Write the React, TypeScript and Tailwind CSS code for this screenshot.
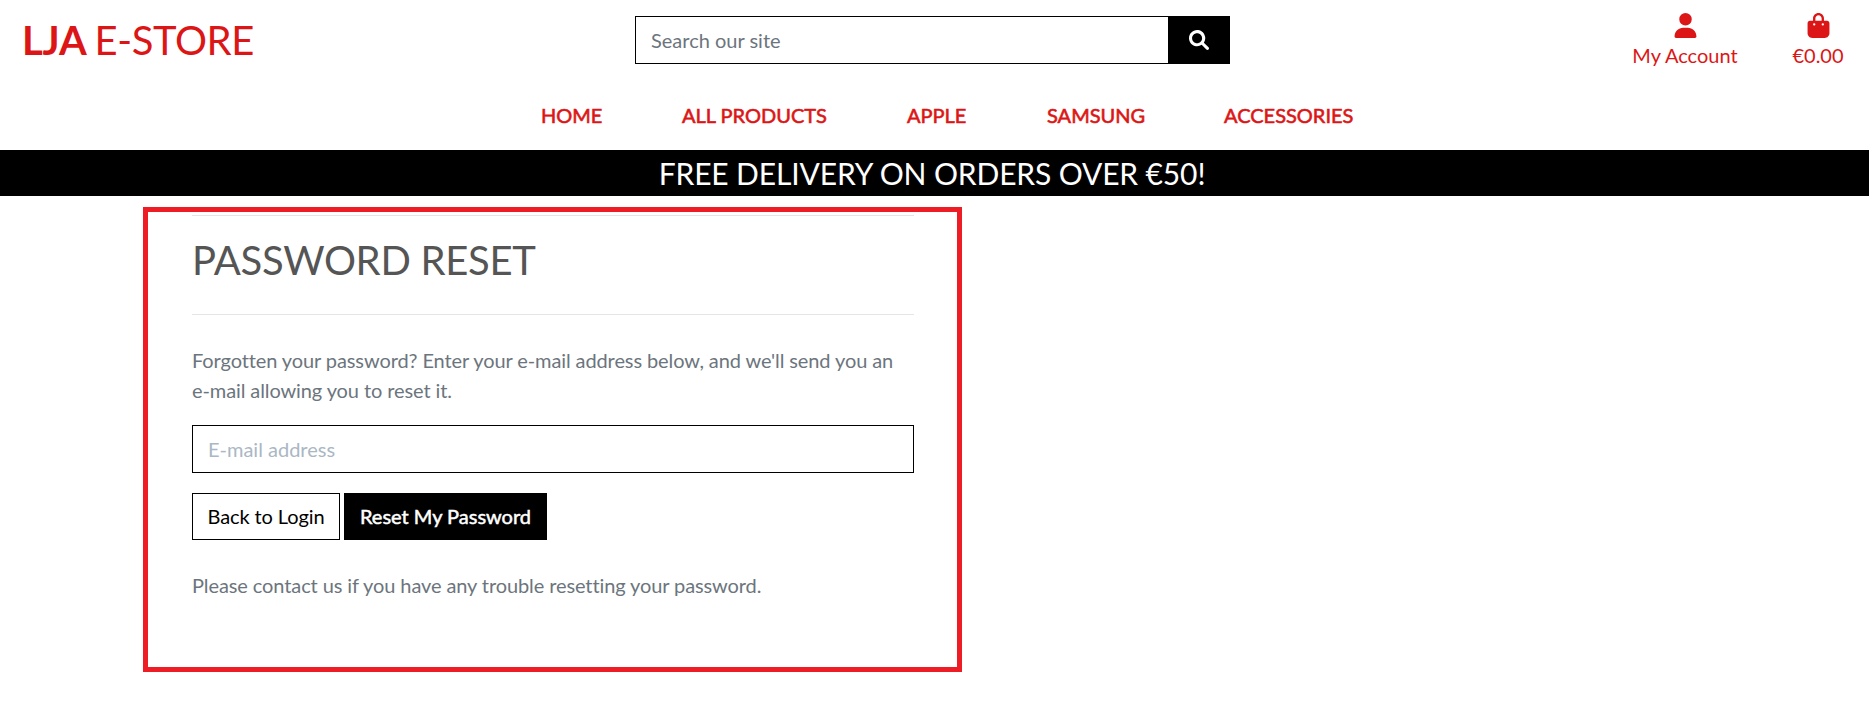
import React from "react";
import { FaBagShopping, FaUser } from "react-icons/fa6";

const links = [
  { label: "HOME", width: "w-[61px]" },
  { label: "ALL PRODUCTS", width: "w-[145px]" },
  { label: "APPLE", width: "w-[60px]" },
  { label: "SAMSUNG", width: "w-[97px]" },
  { label: "ACCESSORIES", width: "w-[131px]" },
];

function SearchIcon() {
  return (
    <svg viewBox="0 0 512 512" className="size-5" fill="currentColor" aria-hidden="true">
      <path d="M500.3 443.7l-119.7-119.7c27.22-40.41 40.65-90.9 33.46-144.7C401.8 87.79 326.8 13.32 235.2 1.723C99.01-15.51-15.51 99.01 1.724 235.2c11.6 91.64 86.08 166.7 177.6 178.9c53.8 7.189 104.3-6.236 144.7-33.46l119.7 119.7c15.62 15.62 40.95 15.62 56.57 0C515.9 484.7 515.9 459.3 500.3 443.7zM79.1 208c0-70.58 57.42-128 128-128s128 57.42 128 128c0 70.58-57.42 128-128 128S79.1 278.6 79.1 208z" />
    </svg>
  );
}

function Header() {
  return (
    <header className="text-[#dc1616]">
      <div className="flex h-20 items-start">
        <a href="#" className="ml-[22px] mt-4 w-[613px] whitespace-nowrap text-[40px] leading-[48px] tracking-[-0.4px] [word-spacing:-2px]">
          <span className="font-bold tracking-[-0.2px]">LJA</span> E-STORE
        </a>
        <form className="mt-4 flex h-12 w-[595px]">
          <input
            type="text"
            placeholder="Search our site"
            className="w-[533px] border border-r-0 border-black px-[15px] text-[20px] text-[#495057] outline-none placeholder:text-[#6c757d]"
          />
          <button type="button" aria-label="Search" className="flex w-[62px] items-center justify-center bg-black text-white">
            <SearchIcon />
          </button>
        </form>
        <a href="#" className="ml-[402px] mt-[13px] flex w-[106px] flex-col items-center whitespace-nowrap text-[20px] leading-[30px]">
          <FaUser size={25} />
          <span className="mt-[2px]">My Account</span>
        </a>
        <a href="#" className="ml-[53px] mt-[13px] flex w-[54px] flex-col items-center whitespace-nowrap text-[20px] leading-[30px]">
          <FaBagShopping size={25} />
          <span className="mt-[2px]">€0.00</span>
        </a>
      </div>
      <nav className="flex h-[70px] gap-20 pl-[541px] pt-5 text-[20px] leading-[30px]">
        {links.map((l) => (
          <a key={l.label} href="#" className={`${l.width} whitespace-nowrap [-webkit-text-stroke:0.6px_#dc1616]`}>
            {l.label}
          </a>
        ))}
      </nav>
    </header>
  );
}

export default function App() {
  return (
    <div className="min-h-[725px] bg-white font-['Lato',sans-serif] [font-variant-ligatures:none]">
      <Header />
      <div className="h-[46px] bg-black pr-[5px] pt-[5px] text-center text-[30px] leading-[36px] tracking-[-0.13px] text-white">
        FREE DELIVERY ON ORDERS OVER €50!
      </div>
      <main className="ml-[143px] mt-[11px] h-[465px] w-[819px] border-[5px] border-[#ee1c24] pl-11 pr-[43px] pt-[3px] text-[20px] leading-[30px] text-[#6c757d]">
        <hr className="border-[#e5e5e5]" />
        <h2 className="mt-5 text-[40px] leading-[48px] tracking-[-0.3px] text-[#555]">PASSWORD RESET</h2>
        <hr className="mt-[30px] border-[#e5e5e5]" />
        <p className="mt-[30px] tracking-[-0.1px]">
          Forgotten your password? Enter your e-mail address below, and we'll send you an e-mail allowing you to reset it.
        </p>
        <input
          type="email"
          placeholder="E-mail address"
          className="mt-5 block h-12 w-full border border-black px-[15px] outline-none placeholder:text-[#aab7c4]"
        />
        <div className="mt-5 flex h-[47px] gap-1">
          <a href="#" className="flex w-[148px] items-center justify-center border border-black pb-px tracking-[-0.1px] text-black">
            Back to Login
          </a>
          <button type="button" className="w-[203px] bg-black pb-px text-white [-webkit-text-stroke:0.5px_#fff]">
            Reset My Password
          </button>
        </div>
        <p className="mt-[30px] tracking-[-0.1px]">Please contact us if you have any trouble resetting your password.</p>
      </main>
    </div>
  );
}
